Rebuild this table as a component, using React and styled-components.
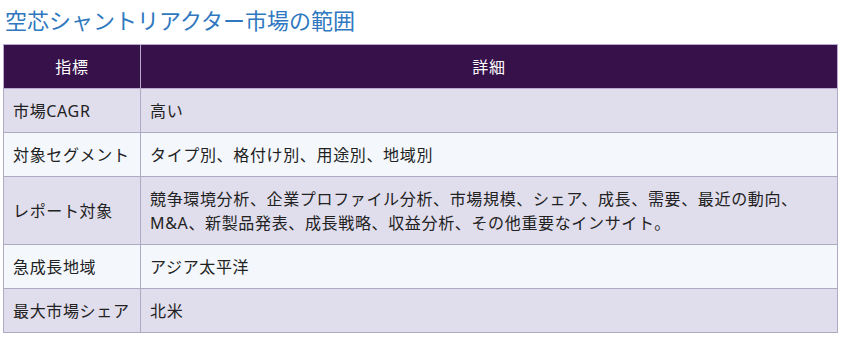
import React from 'react';
import styled, { createGlobalStyle } from 'styled-components';

const GlobalStyle = createGlobalStyle`
  body {
    margin: 0;
    background: #ffffff;
    font-family: 'Noto Sans', 'Noto Sans CJK JP', sans-serif;
  }
`;

const Page = styled.div`
  padding: 4px 3px 0 3px;
`;

const Title = styled.h2`
  margin: 0 0 10px 2px;
  font-family: 'Noto Sans CJK JP', sans-serif;
  font-size: 22px;
  font-weight: 400;
  line-height: 30px;
  color: #2f78bf;
`;

const Table = styled.table`
  width: 835px;
  border-collapse: collapse;
  font-family: 'Noto Sans', 'Noto Sans CJK JP', sans-serif;
  font-size: 16px;
  letter-spacing: 0.65px;
  line-height: 24px;
  color: #222;
`;

const HeadCell = styled.th`
  background: #37114a;
  color: #ffffff;
  font-weight: 400;
  text-align: center;
  padding: 10px 10px 9px;
  border: 1px solid #b9abd0;
  width: ${({ wide }) => (wide ? 'auto' : '116px')};
`;

const Row = styled.tr`
  background: ${({ alt }) => (alt ? '#f4f8fc' : '#e0ddec')};
`;

const Cell = styled.td`
  padding: 10px 9px 9px;
  border: 1px solid #aeaac2;
  vertical-align: middle;
  white-space: ${({ nowrap }) => (nowrap ? 'nowrap' : 'normal')};
`;

const rows = [
  ['市場CAGR', '高い'],
  ['対象セグメント', 'タイプ別、格付け別、用途別、地域別'],
  [
    'レポート対象',
    '競争環境分析、企業プロファイル分析、市場規模、シェア、成長、需要、最近の動向、M&A、新製品発表、成長戦略、収益分析、その他重要なインサイト。',
  ],
  ['急成長地域', 'アジア太平洋'],
  ['最大市場シェア', '北米'],
];

const App = () => (
  <Page>
    <GlobalStyle />
    <Title>空芯シャントリアクター市場の範囲</Title>
    <Table>
      <thead>
        <tr>
          <HeadCell>指標</HeadCell>
          <HeadCell wide>詳細</HeadCell>
        </tr>
      </thead>
      <tbody>
        {rows.map(([k, v], i) => (
          <Row key={k} alt={i % 2 === 1}>
            <Cell nowrap>{k}</Cell>
            <Cell>{v}</Cell>
          </Row>
        ))}
      </tbody>
    </Table>
  </Page>
);

export default App;
